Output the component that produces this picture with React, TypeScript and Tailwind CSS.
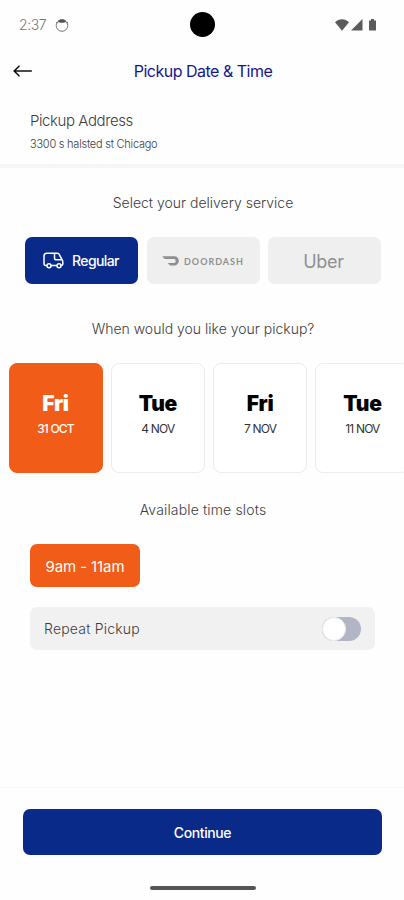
import { useState } from "react";

interface PickupDay {
  id: number;
  day: string;
  date: string;
}

const DAYS: PickupDay[] = [
  { id: 1, day: "Fri", date: "31 OCT" },
  { id: 2, day: "Tue", date: "4 NOV" },
  { id: 3, day: "Fri", date: "7 NOV" },
  { id: 4, day: "Tue", date: "11 NOV" },
];

export default function App() {
  const [selectedDay, setSelectedDay] = useState(1);
  const [repeat, setRepeat] = useState(false);

  return (
    <div className="flex h-[900px] w-[404px] flex-col overflow-hidden bg-[#fefefe] font-['Inter','Liberation_Sans',sans-serif] text-[#3d3d3d]">
      <StatusBar />

      {/* Header */}
      <header className="grid h-[46px] shrink-0 grid-cols-[40px_1fr_38px] items-center">
        <button className="pl-[13px]" aria-label="Back">
          <BackIcon />
        </button>
        <h1 className="text-center text-base tracking-[-0.5px] whitespace-nowrap text-[#16168c]">
          Pickup Date &amp; Time
        </h1>
      </header>

      {/* Address */}
      <section className="h-[74px] shrink-0 border-b-4 border-[#f6f6f6] px-[30px] pt-[17px]">
        <h2 className="text-[15px] leading-5 font-light tracking-[-0.42px]">Pickup Address</h2>
        <p className="mt-[5px] text-[11px] leading-4 font-light tracking-[-0.24px]">
          3300 s halsted st Chicago
        </p>
      </section>

      {/* Delivery service */}
      <SectionTitle className="mt-[25px] pl-0.5">Select your delivery service</SectionTitle>
      <div className="mt-6 grid h-[47px] shrink-0 grid-cols-3 gap-[8.5px] pr-[23px] pl-[25px]">
        <button className="flex items-center justify-center gap-2 rounded-[7px] bg-[#0a2a8a] pr-px text-white">
          <VanIcon />
          <span className="pt-px text-sm font-medium tracking-[-0.6px]">Regular</span>
        </button>
        <button className="flex items-center justify-center gap-[5px] rounded-[7px] bg-[#efefef] text-[#8f8f8f]">
          <DoorDashIcon />
          <span className="pt-0.5 font-['Lato',sans-serif] text-[9px] font-bold tracking-[1px]">DOORDASH</span>
        </button>
        <button className="flex items-center justify-center rounded-[7px] bg-[#efefef] pt-0.5 pr-0.5 text-[#8f8f8f]">
          <span className="text-lg tracking-[-0.3px]">Uber</span>
        </button>
      </div>

      {/* Pickup days */}
      <SectionTitle className="mt-[35px] pl-0.5">When would you like your pickup?</SectionTitle>
      <div className="mt-6 flex h-[110px] shrink-0 gap-[8.3px] overflow-hidden pl-[8.5px]">
        {DAYS.map((d) => (
          <DayCard key={d.id} item={d} selected={d.id === selectedDay} onSelect={() => setSelectedDay(d.id)} />
        ))}
      </div>

      {/* Time slots */}
      <SectionTitle className="mt-[27px] pl-0.5 tracking-[0.15px]">Available time slots</SectionTitle>
      <div className="mt-6 flex shrink-0 px-[30px]">
        <button className="h-[43px] w-[110px] rounded-[7px] bg-[#f25c19] pt-[3px] text-[15px] tracking-[-0.1px] text-white">
          9am - 11am
        </button>
      </div>

      <div className="mt-5 mr-[29px] ml-[30px] flex h-[43px] shrink-0 items-center justify-between rounded-[7px] bg-[#f1f1f1] pr-3.5 pl-3.5">
        <span className="text-[14px] font-light tracking-[0.2px]">Repeat Pickup</span>
        <Toggle on={repeat} onChange={() => setRepeat(!repeat)} />
      </div>

      {/* Footer */}
      <footer className="mt-auto flex h-[113px] shrink-0 flex-col items-center border-t border-[#f7f7f7] pt-[21px]">
        <button className="ml-px h-[46px] w-[359px] rounded-[7px] bg-[#0a2a8a] pt-0.5 text-sm font-medium tracking-[-0.4px] text-white">
          Continue
        </button>
        <div className="mt-[31px] ml-px h-[4px] w-[106px] rounded-full bg-[#555]" />
      </footer>
    </div>
  );
}

function SectionTitle({ className, children }: { className: string; children: string }) {
  return (
    <h3 className={`h-5 shrink-0 text-center text-[14px] leading-5 font-light whitespace-nowrap ${className}`}>
      {children}
    </h3>
  );
}

function DayCard({ item, selected, onSelect }: { item: PickupDay; selected: boolean; onSelect: () => void }) {
  return (
    <button
      onClick={onSelect}
      className={`flex w-[94px] shrink-0 flex-col items-center rounded-[8px] border pt-[26px] ${
        selected ? "border-[#f25c19] bg-[#f25c19] text-white" : "border-[#ececec] bg-white text-black"
      }`}
    >
      <span className="text-[21px] leading-7 font-black tracking-[-0.3px]">{item.day}</span>
      <span className={`mt-[3px] text-[12px] leading-4 tracking-[-0.8px] ${selected ? "font-medium" : "text-[#333]"}`}>
        {item.date}
      </span>
    </button>
  );
}

function Toggle({ on, onChange }: { on: boolean; onChange: () => void }) {
  return (
    <button
      role="switch"
      aria-checked={on}
      aria-label="Repeat Pickup"
      onClick={onChange}
      className={`flex h-[24px] w-[39px] items-center rounded-full ${
        on ? "justify-end bg-[#0a2a8a]" : "bg-[#b1b5c6]"
      }`}
    >
      <span className="h-6 w-6 rounded-full border border-[#ececec] bg-white" />
    </button>
  );
}

function StatusBar() {
  return (
    <div className="grid h-12 shrink-0 grid-cols-[1fr_25px_1fr] items-center pt-px">
      <div className="flex items-center gap-[9px] pl-[19px] text-[#777]">
        <span className="text-sm font-light tracking-[-0.4px]">2:37</span>
        <svg width="14" height="14" viewBox="0 0 14 14" fill="none">
          <circle cx="7" cy="7.5" r="5.8" stroke="#777" />
          <path d="M3 3.2C4.3 1 9.7 1 11 3.2C10.3 5.4 3.7 5.4 3 3.2Z" fill="#555" />
          <path d="M1 4.4L3 5M13 4.4L11 5" stroke="#777" />
        </svg>
      </div>
      <div className="size-[25px] rounded-full bg-black" />
      <div className="flex items-center justify-end pr-[26px]">
        <svg width="43" height="14" viewBox="0 0 43 14" fill="#5b5b5b">
          <path d="M0 4.2C3.7.3 10.3.3 14 4.2L7 12.7Z" />
          <path d="M27.5 1V12.5H16Z" />
          <path d="M34 2.5H36V1H39V2.5H41V12.5H34Z" />
        </svg>
      </div>
    </div>
  );
}

function BackIcon() {
  return (
    <svg width="20" height="14" viewBox="0 0 20 14" fill="none" stroke="#111" strokeWidth="1.6" strokeLinecap="round">
      <path d="M6 2.2L1.2 7L6 11.8M1.5 7H18.3" />
    </svg>
  );
}

function VanIcon() {
  return (
    <svg width="21" height="17" viewBox="0 0 21 17" fill="none" stroke="white" strokeWidth="1.5">
      <path d="M4 13.5H2.7Q1 13.5 1 11.8V4Q1 1.2 3.8 1.2H14.5Q15.7 1.2 16.2 2.3L19.3 8.1Q19.8 9 19.8 10V11.8Q19.8 13.5 18 13.5M11.5 1.2V6Q11.5 7.8 13.3 7.8H19M8 13.5H14" />
      <circle cx="6" cy="13.7" r="2" />
      <circle cx="16" cy="13.7" r="2" />
    </svg>
  );
}

function DoorDashIcon() {
  return (
    <svg width="17" height="10" viewBox="0 0 17 10" fill="currentColor">
      <path d="M.2.3H12C15 .3 16.8 2.3 16.8 4.8S15 9.6 12 9.6H8.6Q8.2 9.6 7.9 9.3L5.6 7H12.1Q13.7 7 13.7 5T12 3.1H3.2Q2.8 3.1 2.5 2.8Z" />
    </svg>
  );
}
